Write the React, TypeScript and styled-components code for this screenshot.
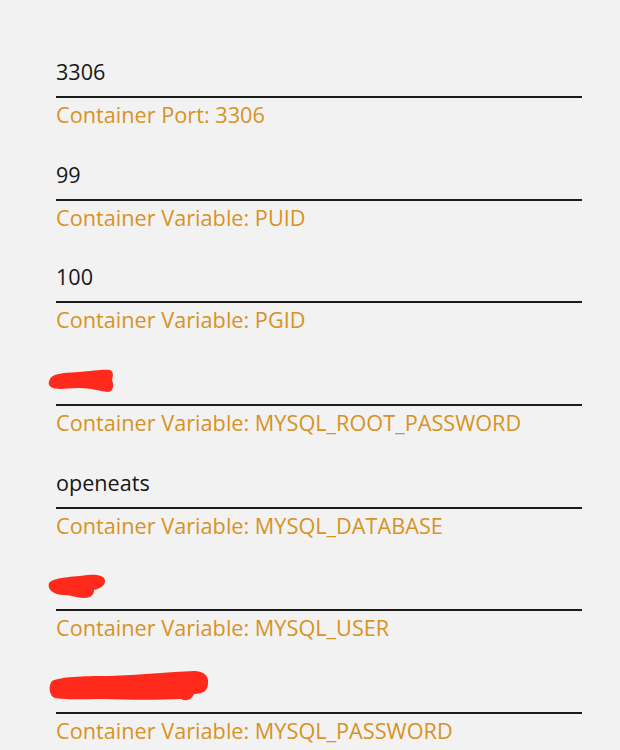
import React from "react";
import styled, { createGlobalStyle } from "styled-components";

const Global = createGlobalStyle`
  html, body {
    margin: 0;
    padding: 0;
    background: #f2f2f2;
  }
  body {
    font-family: "Open Sans", "Noto Sans", sans-serif;
  }
`;

const Form = styled.div`
  display: flex;
  flex-direction: column;
  gap: 24.7px;
  padding: 52px 38px 0 56px;
`;

const Field = styled.div`
  display: flex;
  flex-direction: column;
`;

const Value = styled.div`
  position: relative;
  height: 40px;
  line-height: 40px;
  padding-bottom: 4px;
  border-bottom: 2px solid #1c1c1c;
  font-size: 21.6px;
  color: #161616;
`;

const Label = styled.div`
  margin-top: 2px;
  line-height: 30px;
  font-size: 21.7px;
  color: #d8921f;
  white-space: nowrap;
`;

/* hand-drawn marker blot laid over a hidden value */
const Scribble = styled.svg<{ $left: number; $top: number }>`
  position: absolute;
  left: ${(p) => p.$left}px;
  top: ${(p) => p.$top}px;
  overflow: visible;
`;

type Redaction = { left: number; top: number; w: number; h: number; d: string };

const fields: { value?: string; label: string; redact?: Redaction }[] = [
  { value: "3306", label: "Container Port: 3306" },
  { value: "99", label: "Container Variable: PUID" },
  { value: "100", label: "Container Variable: PGID" },
  {
    label: "Container Variable: MYSQL_ROOT_PASSWORD",
    redact: {
      left: -8,
      top: 8,
      w: 66,
      h: 24,
      d: "M2 11 C4 6 14 5 30 4 C45 3 55 1 62 2 C66 4 65 8 64 12 C66 17 66 23 60 24 C50 23 45 20 30 20 C20 20 10 22 5 20 C0 18 0 15 2 11 Z",
    },
  },
  { value: "openeats", label: "Container Variable: MYSQL_DATABASE" },
  {
    label: "Container Variable: MYSQL_USER",
    redact: {
      left: -8,
      top: 8.5,
      w: 58,
      h: 24,
      d: "M1 9 C6 3 25 3 40 1 C50 0 58 2 57 8 C56 13 50 15 46 16 C46 20 44 24 36 24 C28 24 24 21 16 21 C5 21 -1 15 1 9 Z",
    },
  },
  {
    label: "Container Variable: MYSQL_PASSWORD",
    redact: {
      left: -7,
      top: 4,
      w: 160,
      h: 30,
      d: "M3 9 C15 4 40 4 60 4 C90 3 120 0 145 -1 C155 -1 160 4 159 11 C159 18 155 22 145 22 C143 27 138 30 132 27 C110 28 80 28 55 27 C35 27 15 28 6 26 C0 24 -1 14 3 9 Z",
    },
  },
];

export default function App() {
  return (
    <>
      <Global />
      <Form>
        {fields.map((f, i) => (
          <Field key={i}>
            <Value>
              {f.value}
              {f.redact && (
                <Scribble
                  $left={f.redact.left}
                  $top={f.redact.top}
                  width={f.redact.w}
                  height={f.redact.h}
                  viewBox={`0 0 ${f.redact.w} ${f.redact.h}`}
                >
                  <path d={f.redact.d} fill="#ff2a1c" />
                </Scribble>
              )}
            </Value>
            <Label>{f.label}</Label>
          </Field>
        ))}
      </Form>
    </>
  );
}
